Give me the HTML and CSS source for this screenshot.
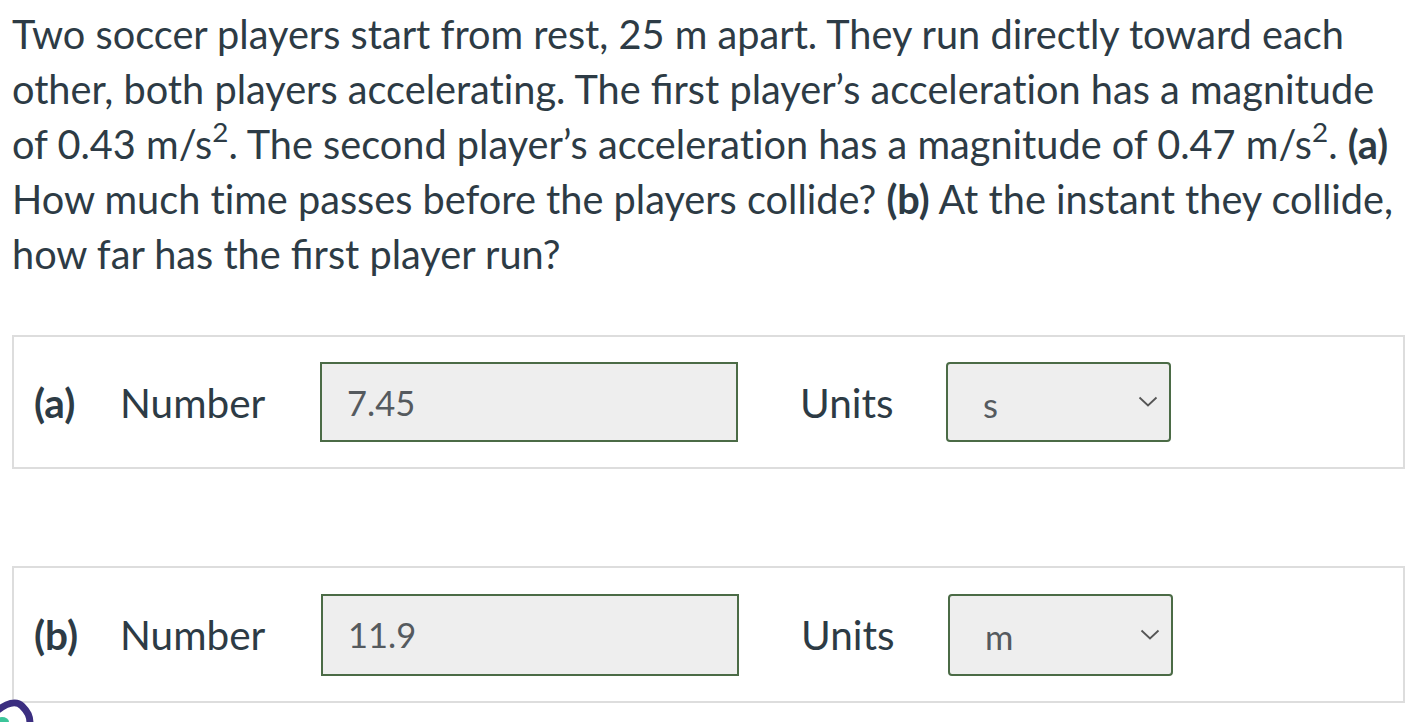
FILE: index.html
```html
<!DOCTYPE html>
<html>
<head>
<meta charset="utf-8">
<link rel="stylesheet" href="styles.css">
</head>
<body>
<div class="page">
  <p class="question">Two soccer players start from rest, 25 m apart. They run directly toward each other, both players accelerat&zwnj;ing. The first player’s accelerat&zwnj;ion has a magnitude of 0.43 m/s<sup>2</sup>. The second player’s accelerat&zwnj;ion has a magnitude of 0.47 m/s<sup>2</sup>. <b>(a)</b> How much t&zwnj;ime passes before the players collide? <b>(b)</b> At the instant they collide, how far has the first player run?</p>

  <div class="part part-a">
    <span class="tag">(a)</span>
    <span class="label">Number</span>
    <div class="input">7.45</div>
    <span class="units">Units</span>
    <div class="select"><span>s</span>
      <svg class="chev" width="20" height="12" viewBox="0 0 20 12"><path d="M1.5 1.5 L10 9.5 L18.5 1.5" fill="none" stroke="#555" stroke-width="1.8"/></svg>
    </div>
  </div>

  <div class="part part-b">
    <span class="tag">(b)</span>
    <span class="label">Number</span>
    <div class="input">11.9</div>
    <span class="units">Units</span>
    <div class="select"><span>m</span>
      <svg class="chev" width="20" height="12" viewBox="0 0 20 12"><path d="M1.5 1.5 L10 9.5 L18.5 1.5" fill="none" stroke="#555" stroke-width="1.8"/></svg>
    </div>
  </div>
</div>
<svg class="scribble" width="40" height="40" viewBox="0 0 40 40">
  <ellipse cx="2" cy="40" rx="7" ry="5" fill="#3cc59a"/>
  <path d="M-2 28 C6 22, 16 18, 22 24 C28 30, 30 34, 30 42" fill="none" stroke="#3b2e80" stroke-width="7" stroke-linecap="round"/>
</svg>
</body>
</html>
```

FILE: styles.css
```css
html, body {
  margin: 0;
  padding: 0;
  background: #ffffff;
}
body {
  font-family: Lato, "Open Sans", sans-serif;
  color: #2d3b45;
  width: 1414px;
  height: 722px;
  overflow: hidden;
  position: relative;
}
.page {
  padding: 6px 10px 0 12px;
}
.question {
  margin: 0;
  font-size: 39.7px;
  line-height: 55px;
}
.question sup {
  font-size: 0.7em;
  line-height: 0;
  vertical-align: 0.62em;
}
.question b {
  font-weight: 700;
}
.part {
  display: flex;
  align-items: center;
  border: 2px solid #dddddd;
  box-sizing: border-box;
  width: 1393px;
  padding: 0 0 0 20px;
  font-size: 40.5px;
}
.part-a {
  margin-top: 54px;
  height: 134px;
}
.part-b {
  margin-top: 97px;
  height: 137px;
}
.tag {
  font-weight: 700;
  width: 86px;
}
.label {
  width: 200px;
}
.input, .select {
  box-sizing: border-box;
  height: 80px;
  background: #eeeeee;
  border: 2px solid #4b6b46;
  color: #555a5e;
  font-size: 34.5px;
  display: flex;
  align-items: center;
}
.input {
  width: 418px;
  padding-left: 25px;
}
.part-b .input, .part-b .select {
  height: 82px;
  margin-left: 1px;
}
.units {
  margin-left: 62px;
  width: 146px;
}
.select {
  width: 225px;
  border-radius: 4px;
  padding-left: 35px;
  justify-content: space-between;
  padding-right: 11px;
}
.select span {
  margin-top: 4px;
}
.chev {
  display: block;
}
.scribble {
  position: absolute;
  left: 0;
  top: 682px;
}
```
